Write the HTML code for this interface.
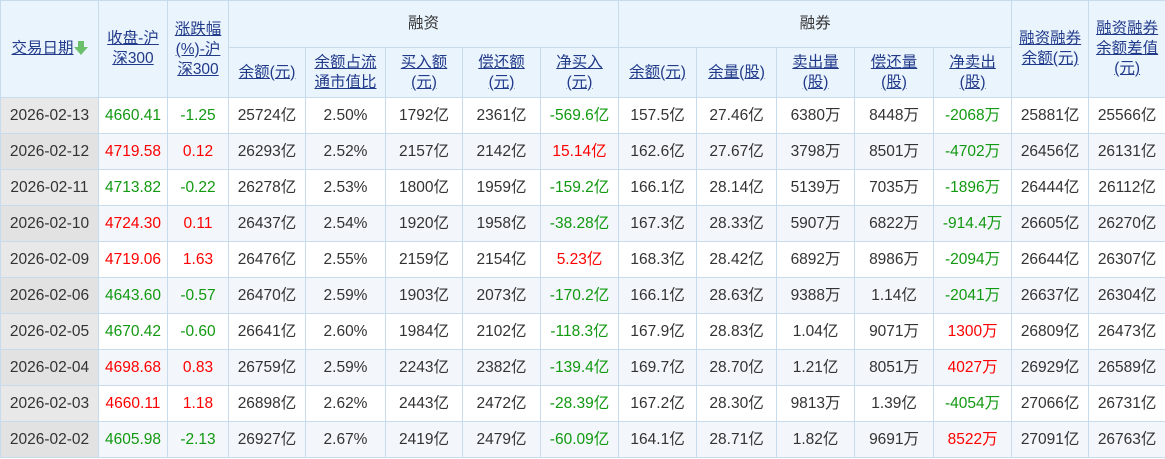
<!DOCTYPE html>
<html><head><meta charset="utf-8"><style>
html,body{margin:0;padding:0;background:#fff;}
table{border-collapse:collapse;table-layout:fixed;width:1165px;font-family:"Liberation Sans","Noto Sans CJK SC",sans-serif;}
td,th{border:1px solid #c7dbed;text-align:center;padding:0;overflow:hidden;white-space:nowrap;}
th{background:#eaf4fd;font-weight:normal;font-size:15.5px;color:#213a8a;line-height:20px;}
th a{color:#213a8a;text-decoration:underline;}
th.g{color:#333;}
td{font-size:15.5px;color:#333;height:35px;line-height:35px;}
td span{display:inline-block;line-height:18px;vertical-align:middle;}
tr.e td{background:#f3f6fa;}
td.d{background:#e8e8e8;}
tr.e td.d{background:#e2e2e2;}
.r{color:#ff0000;}.gr{color:#119911;}
.arr{display:inline-block;width:0;height:0;border-left:7px solid transparent;border-right:7px solid transparent;border-top:8px solid #6cc06c;vertical-align:middle;position:relative;top:2px;}
.arr:before{content:"";position:absolute;left:-3px;top:-14px;width:6px;height:7px;background:#6cc06c;}
</style></head><body>
<table>
<colgroup><col style="width:98px"><col style="width:69px"><col style="width:61px"><col style="width:77px"><col style="width:80px"><col style="width:77px"><col style="width:78px"><col style="width:78px"><col style="width:78px"><col style="width:80px"><col style="width:78px"><col style="width:79px"><col style="width:78px"><col style="width:77px"><col style="width:77px"></colgroup>
<tr style="height:47px"><th rowspan="2"><a>交易日期</a><span class="arr"></span></th><th rowspan="2"><a>收盘-沪<br>深300</a></th><th rowspan="2" style="padding-top:2px"><a>涨跌幅<br>(%)-沪<br>深300</a></th><th colspan="5" class="g">融资</th><th colspan="5" class="g">融券</th><th rowspan="2"><a>融资融券<br>余额(元)</a></th><th rowspan="2"><a>融资融券<br>余额差值<br>(元)</a></th></tr>
<tr style="height:50px"><th><a>余额(元)</a></th><th><a>余额占流<br>通市值比</a></th><th><a>买入额<br>(元)</a></th><th><a>偿还额<br>(元)</a></th><th><a>净买入<br>(元)</a></th><th><a>余额(元)</a></th><th><a>余量(股)</a></th><th><a>卖出量<br>(股)</a></th><th><a>偿还量<br>(股)</a></th><th><a>净卖出<br>(股)</a></th></tr>
<tr><td class="d">2026-02-13</td><td class="gr">4660.41</td><td class="gr">-1.25</td><td><span>25724亿</span></td><td>2.50%</td><td><span>1792亿</span></td><td><span>2361亿</span></td><td class="gr"><span>-569.6亿</span></td><td><span>157.5亿</span></td><td><span>27.46亿</span></td><td><span>6380万</span></td><td><span>8448万</span></td><td class="gr"><span>-2068万</span></td><td><span>25881亿</span></td><td><span>25566亿</span></td></tr>
<tr class="e"><td class="d">2026-02-12</td><td class="r">4719.58</td><td class="r">0.12</td><td><span>26293亿</span></td><td>2.52%</td><td><span>2157亿</span></td><td><span>2142亿</span></td><td class="r"><span>15.14亿</span></td><td><span>162.6亿</span></td><td><span>27.67亿</span></td><td><span>3798万</span></td><td><span>8501万</span></td><td class="gr"><span>-4702万</span></td><td><span>26456亿</span></td><td><span>26131亿</span></td></tr>
<tr><td class="d">2026-02-11</td><td class="gr">4713.82</td><td class="gr">-0.22</td><td><span>26278亿</span></td><td>2.53%</td><td><span>1800亿</span></td><td><span>1959亿</span></td><td class="gr"><span>-159.2亿</span></td><td><span>166.1亿</span></td><td><span>28.14亿</span></td><td><span>5139万</span></td><td><span>7035万</span></td><td class="gr"><span>-1896万</span></td><td><span>26444亿</span></td><td><span>26112亿</span></td></tr>
<tr class="e"><td class="d">2026-02-10</td><td class="r">4724.30</td><td class="r">0.11</td><td><span>26437亿</span></td><td>2.54%</td><td><span>1920亿</span></td><td><span>1958亿</span></td><td class="gr"><span>-38.28亿</span></td><td><span>167.3亿</span></td><td><span>28.33亿</span></td><td><span>5907万</span></td><td><span>6822万</span></td><td class="gr"><span>-914.4万</span></td><td><span>26605亿</span></td><td><span>26270亿</span></td></tr>
<tr><td class="d">2026-02-09</td><td class="r">4719.06</td><td class="r">1.63</td><td><span>26476亿</span></td><td>2.55%</td><td><span>2159亿</span></td><td><span>2154亿</span></td><td class="r"><span>5.23亿</span></td><td><span>168.3亿</span></td><td><span>28.42亿</span></td><td><span>6892万</span></td><td><span>8986万</span></td><td class="gr"><span>-2094万</span></td><td><span>26644亿</span></td><td><span>26307亿</span></td></tr>
<tr class="e"><td class="d">2026-02-06</td><td class="gr">4643.60</td><td class="gr">-0.57</td><td><span>26470亿</span></td><td>2.59%</td><td><span>1903亿</span></td><td><span>2073亿</span></td><td class="gr"><span>-170.2亿</span></td><td><span>166.1亿</span></td><td><span>28.63亿</span></td><td><span>9388万</span></td><td><span>1.14亿</span></td><td class="gr"><span>-2041万</span></td><td><span>26637亿</span></td><td><span>26304亿</span></td></tr>
<tr><td class="d">2026-02-05</td><td class="gr">4670.42</td><td class="gr">-0.60</td><td><span>26641亿</span></td><td>2.60%</td><td><span>1984亿</span></td><td><span>2102亿</span></td><td class="gr"><span>-118.3亿</span></td><td><span>167.9亿</span></td><td><span>28.83亿</span></td><td><span>1.04亿</span></td><td><span>9071万</span></td><td class="r"><span>1300万</span></td><td><span>26809亿</span></td><td><span>26473亿</span></td></tr>
<tr class="e"><td class="d">2026-02-04</td><td class="r">4698.68</td><td class="r">0.83</td><td><span>26759亿</span></td><td>2.59%</td><td><span>2243亿</span></td><td><span>2382亿</span></td><td class="gr"><span>-139.4亿</span></td><td><span>169.7亿</span></td><td><span>28.70亿</span></td><td><span>1.21亿</span></td><td><span>8051万</span></td><td class="r"><span>4027万</span></td><td><span>26929亿</span></td><td><span>26589亿</span></td></tr>
<tr><td class="d">2026-02-03</td><td class="r">4660.11</td><td class="r">1.18</td><td><span>26898亿</span></td><td>2.62%</td><td><span>2443亿</span></td><td><span>2472亿</span></td><td class="gr"><span>-28.39亿</span></td><td><span>167.2亿</span></td><td><span>28.30亿</span></td><td><span>9813万</span></td><td><span>1.39亿</span></td><td class="gr"><span>-4054万</span></td><td><span>27066亿</span></td><td><span>26731亿</span></td></tr>
<tr class="e"><td class="d">2026-02-02</td><td class="gr">4605.98</td><td class="gr">-2.13</td><td><span>26927亿</span></td><td>2.67%</td><td><span>2419亿</span></td><td><span>2479亿</span></td><td class="gr"><span>-60.09亿</span></td><td><span>164.1亿</span></td><td><span>28.71亿</span></td><td><span>1.82亿</span></td><td><span>9691万</span></td><td class="r"><span>8522万</span></td><td><span>27091亿</span></td><td><span>26763亿</span></td></tr>
</table>
</body></html>
